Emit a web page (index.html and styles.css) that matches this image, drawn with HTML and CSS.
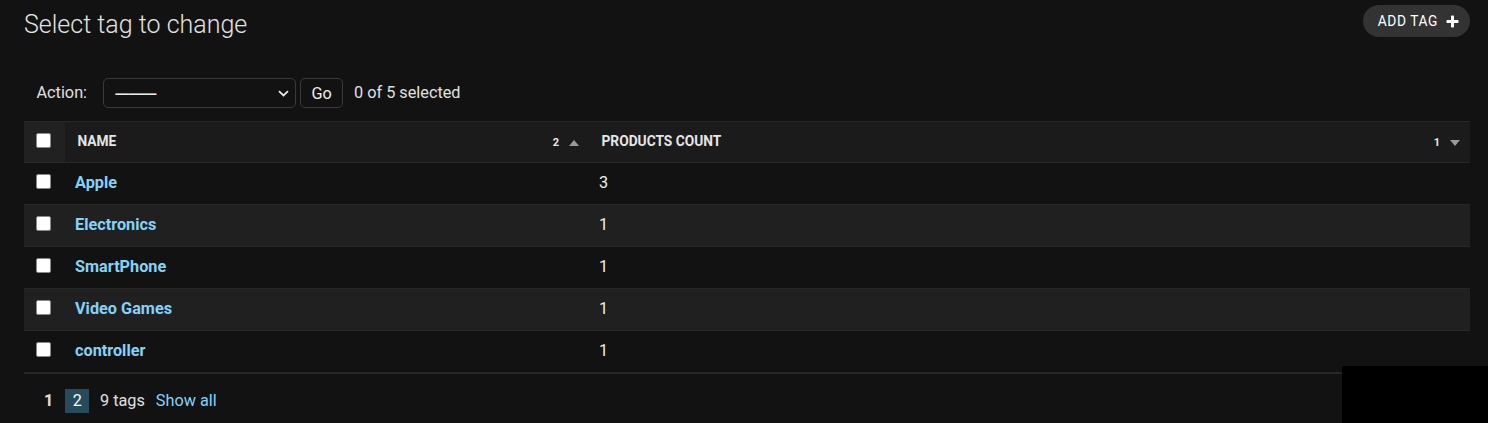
FILE: index.html
```html
<!DOCTYPE html>
<html lang="en">
<head>
<meta charset="utf-8">
<title>Select tag to change</title>
<link rel="stylesheet" href="styles.css">
</head>
<body>
<div class="content">
  <div class="page-head">
    <h1>Select tag to change</h1>
    <a class="addlink" href="#">Add tag
      <svg class="plus" width="13" height="13" viewBox="0 0 13 13" aria-hidden="true"><path d="M5 1.2Q5 0.5 5.7 0.5H7.3Q8 0.5 8 1.2V5H11.8Q12.5 5 12.5 5.7V7.3Q12.5 8 11.8 8H8V11.8Q8 12.5 7.3 12.5H5.7Q5 12.5 5 11.8V8H1.2Q0.5 8 0.5 7.3V5.7Q0.5 5 1.2 5H5Z" fill="#ffffff"/></svg>
    </a>
  </div>

  <div class="actions">
    <label class="action-label">Action:</label>
    <span class="select-wrap">
      <select class="action-select"><option>---------</option></select>
      <svg class="chev" width="11" height="7" viewBox="0 0 11 7" aria-hidden="true"><path d="M1 1.2L5.5 5.5L10 1.2" fill="none" stroke="#e8e8e8" stroke-width="1.8"/></svg>
    </span>
    <button class="go" type="button">Go</button>
    <span class="counter">0 of 5 selected</span>
  </div>

  <table class="results">
    <colgroup><col class="c-cb"><col class="c-name"><col class="c-count"></colgroup>
    <thead>
      <tr>
        <th class="cb-col"><input class="cb" type="checkbox"></th>
        <th class="sorted">
          <div class="th-inner"><span class="th-text">Name</span><span class="sortoptions"><span class="prio">2</span><span class="tri up"></span></span></div>
        </th>
        <th class="sorted">
          <div class="th-inner"><span class="th-text">Products count</span><span class="sortoptions"><span class="prio">1</span><span class="tri down"></span></span></div>
        </th>
      </tr>
    </thead>
    <tbody>
      <tr><td class="cb-col"><input class="cb" type="checkbox"></td><th class="field-name"><a href="#">Apple</a></th><td class="field-count">3</td></tr>
      <tr class="alt"><td class="cb-col"><input class="cb" type="checkbox"></td><th class="field-name"><a href="#">Electronics</a></th><td class="field-count">1</td></tr>
      <tr><td class="cb-col"><input class="cb" type="checkbox"></td><th class="field-name"><a href="#">SmartPhone</a></th><td class="field-count">1</td></tr>
      <tr class="alt"><td class="cb-col"><input class="cb" type="checkbox"></td><th class="field-name"><a href="#">Video Games</a></th><td class="field-count">1</td></tr>
      <tr><td class="cb-col"><input class="cb" type="checkbox"></td><th class="field-name"><a href="#">controller</a></th><td class="field-count">1</td></tr>
    </tbody>
  </table>

  <p class="paginator"><span class="this-page">1</span><a class="page-link" href="#">2</a><span class="result-count">9 tags</span><a class="showall" href="#">Show all</a></p>
</div>
<div class="mask"></div>
</body>
</html>
```

FILE: styles.css
```css
* { box-sizing: border-box; }

html, body {
  margin: 0;
  padding: 0;
  background: #121212;
  color: #eeeeee;
  font-family: Roboto, "Noto Sans", "Liberation Sans", sans-serif;
}

body { position: relative; min-height: 423px; }

.content {
  padding: 0 18px 0 24px;
}

/* header */
.page-head {
  display: flex;
  justify-content: space-between;
  align-items: flex-start;
  padding-top: 5px;
  margin-bottom: 26px;
}

h1 {
  margin: 4.5px 0 0 0;
  font-size: 25px;
  line-height: 30px;
  font-weight: 300;
  color: #e2e2e2;
}

.addlink {
  display: flex;
  align-items: center;
  gap: 8px;
  height: 32px;
  padding: 0 11px 0 14.5px;
  background: #333333;
  border-radius: 16px;
  color: #ffffff;
  text-decoration: none;
  text-transform: uppercase;
  font-size: 13.75px;
  letter-spacing: 0.6px;
  font-weight: 400;
}

.plus { display: block; }

/* actions */
.actions {
  display: flex;
  align-items: center;
  padding: 12.5px 12.5px;
  height: 55px;
  font-size: 16.25px;
  line-height: 20px;
  color: #e0e0e0;
}

.action-label { margin-right: 16px; margin-top: -1px; }

.select-wrap {
  position: relative;
  display: block;
  width: 193px;
  height: 30px;
}

.action-select {
  appearance: none;
  -webkit-appearance: none;
  width: 193px;
  height: 30px;
  margin: 0;
  padding: 0 0 0 11px;
  background: #121212;
  color: #eeeeee;
  border: 1px solid #3a3a3a;
  border-radius: 5px;
  font-family: inherit;
  font-size: 20px;
  letter-spacing: -1px;
}

.chev {
  position: absolute;
  right: 7px;
  top: 12px;
  pointer-events: none;
}

.go {
  width: 43px;
  height: 30px;
  margin: 0 0 0 4px;
  padding: 0;
  background: #121212;
  color: #eeeeee;
  border: 1px solid #3a3a3a;
  border-radius: 5px;
  font-family: inherit;
  font-size: 16.25px;
}

.counter { margin-left: 11px; margin-top: -1px; }

/* table */
.results {
  width: 100%;
  border-collapse: collapse;
  table-layout: fixed;
}

.c-cb { width: 41px; }
.c-name { width: 524px; }

.results thead th {
  height: 41px;
  padding: 0;
  border-top: 1px solid #272727;
  border-bottom: 1px solid #272727;
  background: #212121;
  text-align: left;
  vertical-align: middle;
  color: #e6e6e6;
}

.results thead th.sorted { background: #1b1b1b; }

.th-inner {
  display: flex;
  justify-content: space-between;
  align-items: center;
  padding: 0 10px 0 12.5px;
}

.th-text {
  font-size: 13.75px;
  font-weight: 700;
  text-transform: uppercase;
  line-height: 16px;
  margin-top: -1px;
}

.sortoptions {
  display: flex;
  align-items: center;
  gap: 10px;
}

.prio {
  font-size: 11px;
  font-weight: 700;
  color: #e8e8e8;
  line-height: 12px;
  padding-top: 2px;
}

.tri {
  display: block;
  width: 0;
  height: 0;
  border-left: 5.5px solid transparent;
  border-right: 5.5px solid transparent;
  margin-top: 2px;
}

.tri.up { border-bottom: 6px solid #9a9a9a; }
.tri.down { border-top: 6px solid #9a9a9a; }

.cb-col {
  padding: 0 0 0 12px !important;
  text-align: left;
}

.cb {
  appearance: none;
  -webkit-appearance: none;
  display: inline-block;
  width: 15px;
  height: 15px;
  margin: 0 0 4px 0;
  vertical-align: middle;
  background: #ffffff;
  border: 1px solid #8a8a8a;
  border-radius: 2px;
}

.results tbody td,
.results tbody th {
  padding: 10px 10px;
  height: 42.1px;
  line-height: 20.5px;
  font-size: 16.25px;
  border-bottom: 1px solid #272727;
  text-align: left;
  vertical-align: middle;
}

.results tbody tr.alt td,
.results tbody tr.alt th { background: #202020; }

.field-name { font-weight: 700; }

.field-name a {
  color: #81d4fa;
  text-decoration: none;
}

.field-count { color: #eeeeee; }

/* paginator */
.paginator {
  display: flex;
  align-items: center;
  margin: 0;
  padding: 13px 12.5px 10px;
  border-top: 1px solid #272727;
  font-size: 16.25px;
  line-height: 28px;
  color: #e0e0e0;
}

.this-page {
  padding: 0 7.5px;
  font-weight: 700;
  line-height: 24px;
}

.page-link {
  margin-left: 4.5px;
  padding: 0 7.5px;
  line-height: 24px;
  background: #264b5d;
  color: #f7f7f7;
  text-decoration: none;
}

.result-count { margin-left: 10.5px; }

.showall {
  margin-left: 11px;
  color: #81d4fa;
  text-decoration: none;
}

/* black overlay box in the bottom-right corner */
.mask {
  position: absolute;
  left: 1342px;
  top: 366px;
  width: 146px;
  height: 57px;
  background: #000000;
}
```
